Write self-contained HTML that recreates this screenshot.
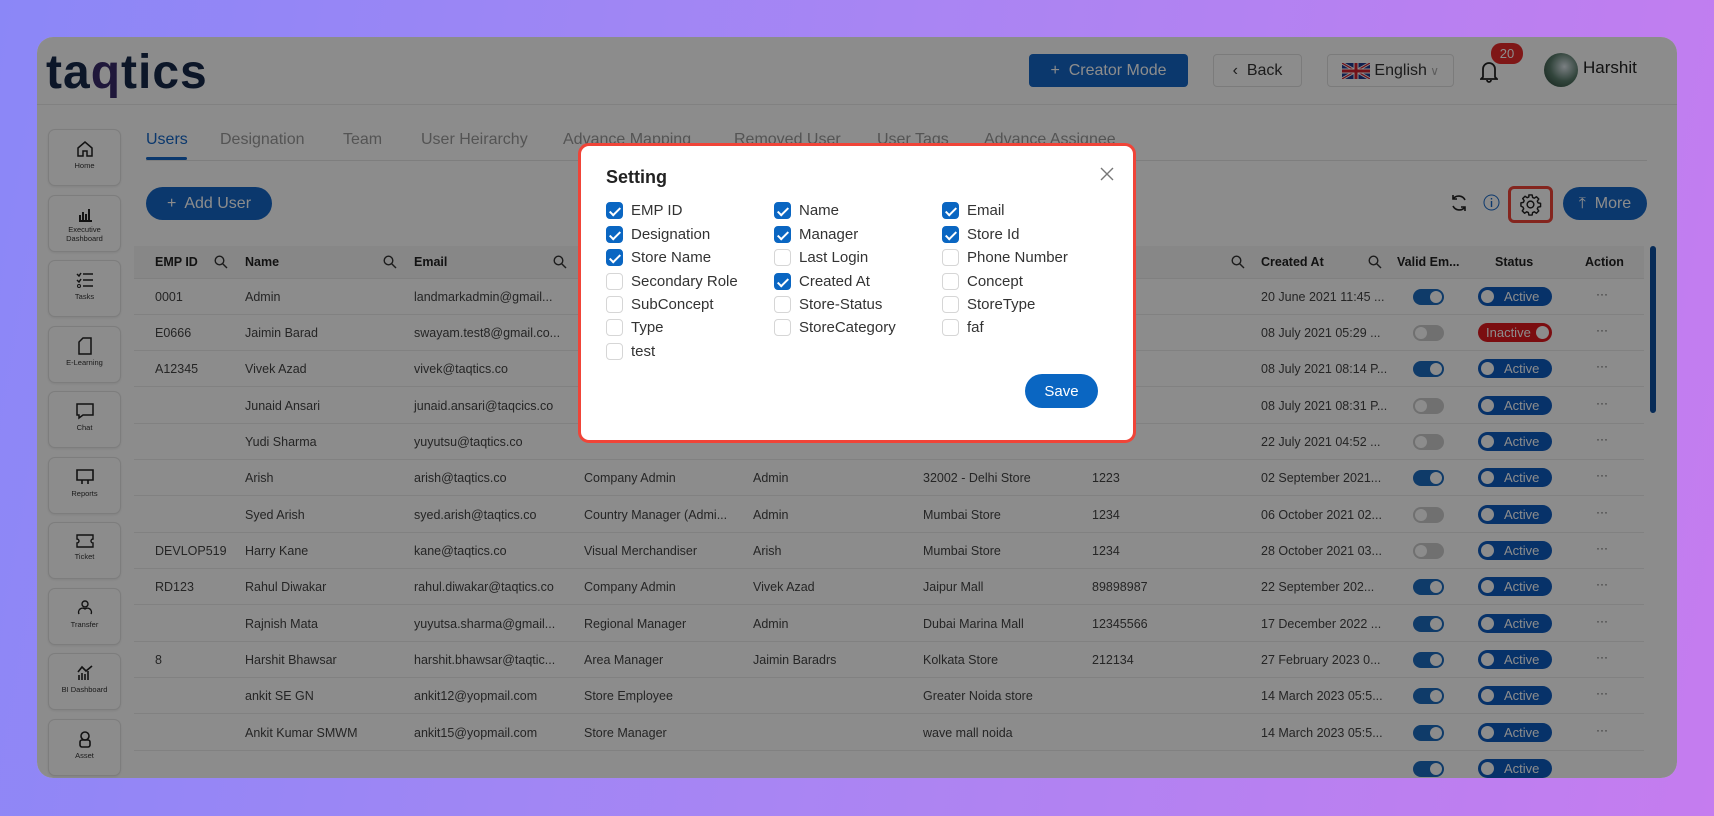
<!DOCTYPE html>
<html><head><meta charset="utf-8"><style>
*{box-sizing:border-box;margin:0;padding:0}
body{width:1714px;height:816px;overflow:hidden;background:linear-gradient(100deg,#8b87f7 0%,#a985f3 50%,#c57cef 100%);font-family:"Liberation Sans",sans-serif;position:relative}
.panel{position:absolute;left:37px;top:37px;width:1640px;height:741px;background:#fff;border-radius:16px;overflow:hidden}
.abs{position:absolute}
.logo{left:9px;top:8px;font-size:48px;font-weight:bold;color:#16294a;letter-spacing:1px}
.btn{position:absolute;border-radius:4px;font-size:16px;display:flex;align-items:center;justify-content:center}
.side{position:absolute;left:11px;width:73px;height:57px;border:1px solid #e3e3e3;border-radius:7px;background:#fff;text-align:center;font-size:7.5px;color:#333;box-shadow:0 1px 2px rgba(0,0,0,.08)}
.side svg{display:block;margin:10px auto 3px}
.tab{position:absolute;top:94px;font-size:16px;color:#9a9a9a}
.th{position:absolute;top:209px;height:32px;line-height:32px;font-size:12.5px;font-weight:bold;color:#222}
.srch{position:absolute;top:218px}
.row{position:absolute;left:97px;width:1510px;height:36px;border-bottom:1px solid #ececec}
.c{position:absolute;top:0;line-height:36px;font-size:12.5px;color:#444;white-space:nowrap}
.tg{position:absolute;top:10px;left:1279px;width:31px;height:16px;border-radius:8px;background:#ccc}
.tg::after{content:"";position:absolute;top:2px;width:12px;height:12px;border-radius:50%;background:#fff}
.tg.on{background:#1d6cc0}.tg.on::after{right:2px}.tg:not(.on)::after{left:2px}
.st{position:absolute;top:8px;left:1344px;width:74px;height:19px;border-radius:10px;background:#0d5bc0;color:#fff;font-size:13px;line-height:19px;padding-left:26px}
.st::before{content:"";position:absolute;left:3px;top:3px;width:13px;height:13px;border-radius:50%;background:#fff}
.st.in{background:#e0191e;padding-left:8px}.st.in::before{left:auto;right:3px}
.dots{position:absolute;left:1462px;top:0;line-height:30px;font-size:12px;color:#555}
.dim{position:absolute;left:0;top:0;width:1640px;height:741px;background:rgba(0,0,0,.45)}
.modal{position:absolute;left:578px;top:143px;width:558px;height:300px;background:#fff;border:3px solid #f04438;border-radius:11px}
.cb{position:absolute;width:17px;height:17px;border-radius:4px;border:1px solid #d6d6d6;background:#fff}
.cb.k{background:#0a66c2;border-color:#0a66c2}
.cb.k::after{content:"";position:absolute;left:5px;top:1.5px;width:4px;height:9px;border:solid #fff;border-width:0 2px 2px 0;transform:rotate(45deg)}
.lb{position:absolute;font-size:15px;color:#333;line-height:17px}
</style></head><body>
<div class="panel">
  <div class="abs logo">ta<span style="color:#3a2a6a">q</span>tics</div>
  <div class="abs" style="left:0;top:67px;width:1640px;height:1px;background:#ececec"></div>
  <div class="btn" style="left:992px;top:17px;width:159px;height:33px;background:#1466c6;color:#fff">+&nbsp; Creator Mode</div>
  <div class="btn" style="left:1176px;top:17px;width:89px;height:33px;background:#fff;border:1px solid #e0e0e0;color:#333">‹&nbsp; Back</div>
  <div class="btn" style="left:1290px;top:17px;width:127px;height:33px;background:#fff;border:1px solid #e0e0e0;color:#333"><svg width="28" height="16" viewBox="0 0 28 16"><rect width="28" height="16" fill="#1f3a8f"/><path d="M0 0L28 16M28 0L0 16" stroke="#fff" stroke-width="3"/><path d="M0 0L28 16M28 0L0 16" stroke="#d0202f" stroke-width="1.2"/><path d="M14 0V16M0 8H28" stroke="#fff" stroke-width="5"/><path d="M14 0V16M0 8H28" stroke="#d0202f" stroke-width="3"/></svg>&nbsp;English <span style="color:#aaa;font-size:12px">&nbsp;∨</span></div>
  <svg class="abs" style="left:1443px;top:22px" width="18" height="24" viewBox="0 0 18 24"><path d="M3 18V10a6 6 0 0112 0v8l2 2H1z M7 21a2 2 0 004 0" fill="none" stroke="#222" stroke-width="1.8"/></svg>
  <div class="abs" style="left:1454px;top:6px;width:32px;height:21px;border-radius:10px;background:#e82a2a;color:#fff;font-size:13px;text-align:center;line-height:21px">20</div>
  <div class="abs" style="left:1507px;top:16px;width:34px;height:34px;border-radius:50%;background:radial-gradient(circle at 60% 40%,#dfe8ee,#5b7d6d 50%,#1f3a2d)"></div>
  <div class="abs" style="left:1546px;top:21px;font-size:17px;color:#222">Harshit</div>

  <div class="side" style="top:92px"><svg width="18" height="18" viewBox="0 0 18 18"><path d="M2 8L9 2l7 6v8h-5v-5H7v5H2z" fill="none" stroke="#222" stroke-width="1.5"/></svg>Home</div>
  <div class="side" style="top:158px"><svg width="16" height="16" viewBox="0 0 16 16"><path d="M2 15h13M3 14V9M6 14V6M9 14V8M12 14V3" stroke="#222" stroke-width="2"/></svg>Executive<br>Dashboard</div>
  <div class="side" style="top:223px"><svg width="18" height="18" viewBox="0 0 18 18"><path d="M7 3h10M7 9h10M7 15h10M1 3l2 2 2-3M1 9l2 2 2-3" fill="none" stroke="#222" stroke-width="1.5"/><circle cx="3" cy="15" r="1.5" fill="none" stroke="#222"/></svg>Tasks</div>
  <div class="side" style="top:289px"><svg width="14" height="18" viewBox="0 0 14 18"><path d="M5 1h8v16H1V5z" fill="none" stroke="#222" stroke-width="1.5"/></svg>E-Learning</div>
  <div class="side" style="top:354px"><svg width="20" height="18" viewBox="0 0 20 18"><path d="M2 2h16v11H8l-4 3v-3H2z" fill="none" stroke="#222" stroke-width="1.5"/></svg>Chat</div>
  <div class="side" style="top:420px"><svg width="20" height="18" viewBox="0 0 20 18"><path d="M2 2h16v10H2zM7 12v4M13 12v4" fill="none" stroke="#222" stroke-width="1.6"/></svg>Reports</div>
  <div class="side" style="top:485px"><svg width="20" height="16" viewBox="0 0 20 16"><path d="M2 2h16v4a2 2 0 000 4v4H2v-4a2 2 0 000-4z" fill="none" stroke="#222" stroke-width="1.4"/></svg>Ticket</div>
  <div class="side" style="top:551px"><svg width="18" height="18" viewBox="0 0 18 18"><circle cx="9" cy="5" r="3" fill="none" stroke="#222" stroke-width="1.4"/><path d="M3 15a4 4 0 016-5 4 4 0 016 5" fill="none" stroke="#222" stroke-width="1.4"/></svg>Transfer</div>
  <div class="side" style="top:616px"><svg width="18" height="18" viewBox="0 0 18 18"><path d="M3 16V11M6 16V9M9 16V10M12 16V7M2 8l4-5 4 4 6-5" fill="none" stroke="#222" stroke-width="1.6"/></svg>BI Dashboard</div>
  <div class="side" style="top:682px"><svg width="18" height="18" viewBox="0 0 18 18"><circle cx="9" cy="6" r="4" fill="none" stroke="#222" stroke-width="1.6"/><rect x="4" y="10" width="10" height="7" rx="2" fill="none" stroke="#222" stroke-width="1.6"/></svg>Asset</div>

  <div class="tab" style="left:109px;color:#1466c6">Users</div>
  <div class="abs" style="left:109px;top:120px;width:41px;height:3px;background:#1466c6;border-radius:2px"></div>
  <div class="abs" style="left:109px;top:123px;width:1501px;height:1px;background:#e6e6e6"></div>
  <div class="tab" style="left:183px">Designation</div>
  <div class="tab" style="left:306px">Team</div>
  <div class="tab" style="left:384px">User Heirarchy</div>
  <div class="tab" style="left:526px">Advance Mapping</div>
  <div class="tab" style="left:697px">Removed User</div>
  <div class="tab" style="left:840px">User Tags</div>
  <div class="tab" style="left:947px">Advance Assignee</div>

  <div class="btn" style="left:109px;top:150px;width:126px;height:33px;border-radius:17px;background:#1466c6;color:#fff">+&nbsp; Add User</div>
  <svg class="abs" style="left:1411px;top:155px" width="22" height="22" viewBox="0 0 22 22"><path d="M17 8a7 7 0 00-12-1M5 14a7 7 0 0012 1" fill="none" stroke="#222" stroke-width="1.6"/><path d="M5 3v4h4M17 19v-4h-4" fill="none" stroke="#222" stroke-width="1.6"/></svg>
  <svg class="abs" style="left:1446px;top:157px" width="17" height="17" viewBox="0 0 17 17"><circle cx="8.5" cy="8.5" r="7.5" fill="none" stroke="#1466c6"/><path d="M8.5 7v6M8.5 4v1.5" stroke="#1466c6" stroke-width="1.4"/></svg>
  <div class="abs" style="left:1471px;top:149px;width:45px;height:37px;border:3px solid #f04438;border-radius:6px;background:#fff"></div>
  <svg class="abs" style="left:1482px;top:156px" width="23" height="23" viewBox="0 0 24 24"><path d="M10.3 2h3.4l.5 2.6 1.8.8 2.2-1.5 2.4 2.4-1.5 2.2.8 1.8 2.6.5v3.4l-2.6.5-.8 1.8 1.5 2.2-2.4 2.4-2.2-1.5-1.8.8-.5 2.6h-3.4l-.5-2.6-1.8-.8-2.2 1.5-2.4-2.4 1.5-2.2-.8-1.8L2 13.7v-3.4l2.6-.5.8-1.8-1.5-2.2 2.4-2.4 2.2 1.5 1.8-.8z" fill="none" stroke="#222" stroke-width="1.5" stroke-linejoin="round"/><circle cx="12" cy="12" r="3.5" fill="none" stroke="#222" stroke-width="1.5"/></svg>
  <div class="btn" style="left:1526px;top:150px;width:84px;height:33px;border-radius:17px;background:#1466c6;color:#fff">⤒&nbsp; More</div>

  <div class="abs" style="left:97px;top:209px;width:1510px;height:33px;background:#f6f6f6;border-bottom:1px solid #eaeaea"></div>
  <div class="th" style="left:118px">EMP ID</div>
  <div class="th" style="left:208px">Name</div>
  <div class="th" style="left:377px">Email</div>
  <div class="th" style="left:1224px">Created At</div>
  <div class="th" style="left:1360px">Valid Em...</div>
  <div class="th" style="left:1458px">Status</div>
  <div class="th" style="left:1548px">Action</div>
  <svg class="srch" style="left:177px" width="14" height="14" viewBox="0 0 14 14"><circle cx="5.5" cy="5.5" r="4.3" fill="none" stroke="#333" stroke-width="1.4"/><path d="M8.7 8.7L13 13" stroke="#333" stroke-width="1.4"/></svg>
  <svg class="srch" style="left:346px" width="14" height="14" viewBox="0 0 14 14"><circle cx="5.5" cy="5.5" r="4.3" fill="none" stroke="#333" stroke-width="1.4"/><path d="M8.7 8.7L13 13" stroke="#333" stroke-width="1.4"/></svg>
  <svg class="srch" style="left:516px" width="14" height="14" viewBox="0 0 14 14"><circle cx="5.5" cy="5.5" r="4.3" fill="none" stroke="#333" stroke-width="1.4"/><path d="M8.7 8.7L13 13" stroke="#333" stroke-width="1.4"/></svg>
  <svg class="srch" style="left:1194px" width="14" height="14" viewBox="0 0 14 14"><circle cx="5.5" cy="5.5" r="4.3" fill="none" stroke="#333" stroke-width="1.4"/><path d="M8.7 8.7L13 13" stroke="#333" stroke-width="1.4"/></svg>
  <svg class="srch" style="left:1331px" width="14" height="14" viewBox="0 0 14 14"><circle cx="5.5" cy="5.5" r="4.3" fill="none" stroke="#333" stroke-width="1.4"/><path d="M8.7 8.7L13 13" stroke="#333" stroke-width="1.4"/></svg>
  <div class="abs" style="left:1613px;top:209px;width:6px;height:167px;background:#0d4f9e;border-radius:3px"></div>

  <div class="row" style="top:242px"><span class="c" style="left:21px">0001</span><span class="c" style="left:111px">Admin</span><span class="c" style="left:280px">landmarkadmin@gmail...</span><span class="c" style="left:1127px">20 June 2021 11:45 ...</span><span class="tg on"></span><span class="st">Active</span><span class="dots">···</span></div>
  <div class="row" style="top:278px"><span class="c" style="left:21px">E0666</span><span class="c" style="left:111px">Jaimin Barad</span><span class="c" style="left:280px">swayam.test8@gmail.co...</span><span class="c" style="left:1127px">08 July 2021 05:29 ...</span><span class="tg"></span><span class="st in">Inactive</span><span class="dots">···</span></div>
  <div class="row" style="top:314px"><span class="c" style="left:21px">A12345</span><span class="c" style="left:111px">Vivek Azad</span><span class="c" style="left:280px">vivek@taqtics.co</span><span class="c" style="left:1127px">08 July 2021 08:14 P...</span><span class="tg on"></span><span class="st">Active</span><span class="dots">···</span></div>
  <div class="row" style="top:351px"><span class="c" style="left:111px">Junaid Ansari</span><span class="c" style="left:280px">junaid.ansari@taqcics.co</span><span class="c" style="left:1127px">08 July 2021 08:31 P...</span><span class="tg"></span><span class="st">Active</span><span class="dots">···</span></div>
  <div class="row" style="top:387px"><span class="c" style="left:111px">Yudi Sharma</span><span class="c" style="left:280px">yuyutsu@taqtics.co</span><span class="c" style="left:1127px">22 July 2021 04:52 ...</span><span class="tg"></span><span class="st">Active</span><span class="dots">···</span></div>
  <div class="row" style="top:423px"><span class="c" style="left:111px">Arish</span><span class="c" style="left:280px">arish@taqtics.co</span><span class="c" style="left:450px">Company Admin</span><span class="c" style="left:619px">Admin</span><span class="c" style="left:789px">32002 - Delhi Store</span><span class="c" style="left:958px">1223</span><span class="c" style="left:1127px">02 September 2021...</span><span class="tg on"></span><span class="st">Active</span><span class="dots">···</span></div>
  <div class="row" style="top:460px"><span class="c" style="left:111px">Syed Arish</span><span class="c" style="left:280px">syed.arish@taqtics.co</span><span class="c" style="left:450px">Country Manager (Admi...</span><span class="c" style="left:619px">Admin</span><span class="c" style="left:789px">Mumbai Store</span><span class="c" style="left:958px">1234</span><span class="c" style="left:1127px">06 October 2021 02...</span><span class="tg"></span><span class="st">Active</span><span class="dots">···</span></div>
  <div class="row" style="top:496px"><span class="c" style="left:21px">DEVLOP519</span><span class="c" style="left:111px">Harry Kane</span><span class="c" style="left:280px">kane@taqtics.co</span><span class="c" style="left:450px">Visual Merchandiser</span><span class="c" style="left:619px">Arish</span><span class="c" style="left:789px">Mumbai Store</span><span class="c" style="left:958px">1234</span><span class="c" style="left:1127px">28 October 2021 03...</span><span class="tg"></span><span class="st">Active</span><span class="dots">···</span></div>
  <div class="row" style="top:532px"><span class="c" style="left:21px">RD123</span><span class="c" style="left:111px">Rahul Diwakar</span><span class="c" style="left:280px">rahul.diwakar@taqtics.co</span><span class="c" style="left:450px">Company Admin</span><span class="c" style="left:619px">Vivek Azad</span><span class="c" style="left:789px">Jaipur Mall</span><span class="c" style="left:958px">89898987</span><span class="c" style="left:1127px">22 September 202...</span><span class="tg on"></span><span class="st">Active</span><span class="dots">···</span></div>
  <div class="row" style="top:569px"><span class="c" style="left:111px">Rajnish Mata</span><span class="c" style="left:280px">yuyutsa.sharma@gmail...</span><span class="c" style="left:450px">Regional Manager</span><span class="c" style="left:619px">Admin</span><span class="c" style="left:789px">Dubai Marina Mall</span><span class="c" style="left:958px">12345566</span><span class="c" style="left:1127px">17 December 2022 ...</span><span class="tg on"></span><span class="st">Active</span><span class="dots">···</span></div>
  <div class="row" style="top:605px"><span class="c" style="left:21px">8</span><span class="c" style="left:111px">Harshit Bhawsar</span><span class="c" style="left:280px">harshit.bhawsar@taqtic...</span><span class="c" style="left:450px">Area Manager</span><span class="c" style="left:619px">Jaimin Baradrs</span><span class="c" style="left:789px">Kolkata Store</span><span class="c" style="left:958px">212134</span><span class="c" style="left:1127px">27 February 2023 0...</span><span class="tg on"></span><span class="st">Active</span><span class="dots">···</span></div>
  <div class="row" style="top:641px"><span class="c" style="left:111px">ankit SE GN</span><span class="c" style="left:280px">ankit12@yopmail.com</span><span class="c" style="left:450px">Store Employee</span><span class="c" style="left:789px">Greater Noida store</span><span class="c" style="left:1127px">14 March 2023 05:5...</span><span class="tg on"></span><span class="st">Active</span><span class="dots">···</span></div>
  <div class="row" style="top:678px"><span class="c" style="left:111px">Ankit Kumar SMWM</span><span class="c" style="left:280px">ankit15@yopmail.com</span><span class="c" style="left:450px">Store Manager</span><span class="c" style="left:789px">wave mall noida</span><span class="c" style="left:1127px">14 March 2023 05:5...</span><span class="tg on"></span><span class="st">Active</span><span class="dots">···</span></div>
  <div class="row" style="top:714px;border:none"><span class="tg on"></span><span class="st">Active</span></div>

  <div class="dim"></div>
</div>

<div class="modal">
  <div class="abs" style="left:25px;top:21px;font-size:18px;font-weight:bold;color:#222">Setting</div>
  <svg class="abs" style="left:519px;top:21px" width="14" height="14" viewBox="0 0 14 14"><path d="M1 1l12 12M13 1L1 13" stroke="#777" stroke-width="1.4"/></svg>
  <div class="cb k" style="left:25px;top:56px"></div><div class="lb" style="left:50px;top:56px">EMP ID</div>
  <div class="cb k" style="left:193px;top:56px"></div><div class="lb" style="left:218px;top:56px">Name</div>
  <div class="cb k" style="left:361px;top:56px"></div><div class="lb" style="left:386px;top:56px">Email</div>
  <div class="cb k" style="left:25px;top:80px"></div><div class="lb" style="left:50px;top:80px">Designation</div>
  <div class="cb k" style="left:193px;top:80px"></div><div class="lb" style="left:218px;top:80px">Manager</div>
  <div class="cb k" style="left:361px;top:80px"></div><div class="lb" style="left:386px;top:80px">Store Id</div>
  <div class="cb k" style="left:25px;top:103px"></div><div class="lb" style="left:50px;top:103px">Store Name</div>
  <div class="cb" style="left:193px;top:103px"></div><div class="lb" style="left:218px;top:103px">Last Login</div>
  <div class="cb" style="left:361px;top:103px"></div><div class="lb" style="left:386px;top:103px">Phone Number</div>
  <div class="cb" style="left:25px;top:127px"></div><div class="lb" style="left:50px;top:127px">Secondary Role</div>
  <div class="cb k" style="left:193px;top:127px"></div><div class="lb" style="left:218px;top:127px">Created At</div>
  <div class="cb" style="left:361px;top:127px"></div><div class="lb" style="left:386px;top:127px">Concept</div>
  <div class="cb" style="left:25px;top:150px"></div><div class="lb" style="left:50px;top:150px">SubConcept</div>
  <div class="cb" style="left:193px;top:150px"></div><div class="lb" style="left:218px;top:150px">Store-Status</div>
  <div class="cb" style="left:361px;top:150px"></div><div class="lb" style="left:386px;top:150px">StoreType</div>
  <div class="cb" style="left:25px;top:173px"></div><div class="lb" style="left:50px;top:173px">Type</div>
  <div class="cb" style="left:193px;top:173px"></div><div class="lb" style="left:218px;top:173px">StoreCategory</div>
  <div class="cb" style="left:361px;top:173px"></div><div class="lb" style="left:386px;top:173px">faf</div>
  <div class="cb" style="left:25px;top:197px"></div><div class="lb" style="left:50px;top:197px">test</div>
  <div class="btn" style="left:444px;top:228px;width:73px;height:34px;border-radius:17px;background:#0a66c2;color:#fff;font-size:15px">Save</div>
</div>
</body></html>
